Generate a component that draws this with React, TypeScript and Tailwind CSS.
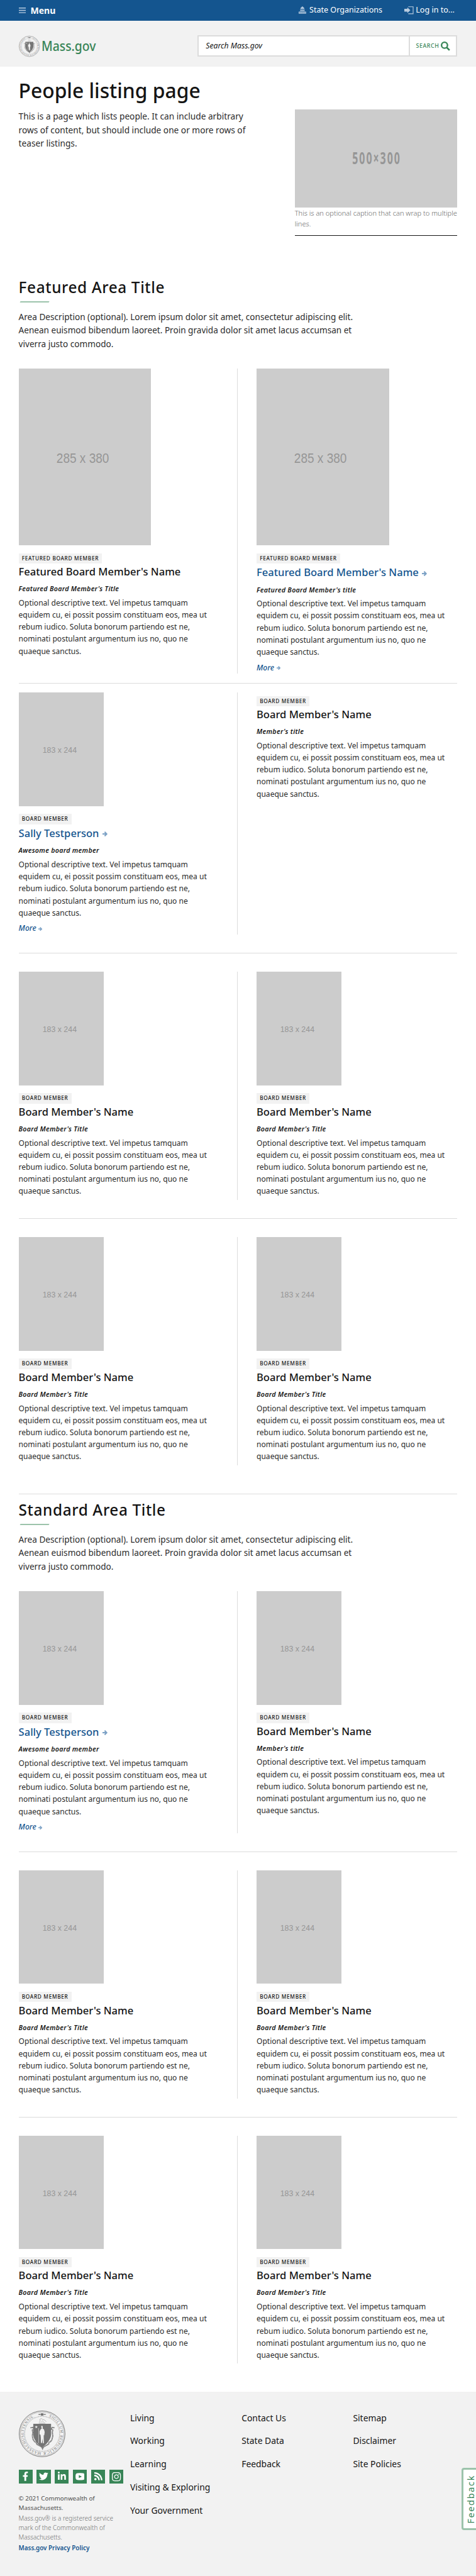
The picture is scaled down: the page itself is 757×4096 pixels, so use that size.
import type { ReactNode } from "react";
import { FaFacebookF, FaInstagram, FaLinkedinIn, FaRss, FaTwitter } from "react-icons/fa";

/* The root sets --spacing, so every numeric spacing class below counts in design units. */

type Person = {
  size?: "large" | "small" | "none";
  tag: string;
  name: string;
  title: string;
  link?: boolean;
};

const SEAL_GREY = "#757575";

function Seal({ id, className }: { id: string; className: string }) {
  return (
    <svg viewBox="0 0 100 100" className={`overflow-visible ${className}`} fill="none">
      <defs>
        <path id={id} d="M50 10.6A39.4 39.4 0 1 1 49.9 10.6" />
      </defs>
      <circle cx="50" cy="50" r="49.3" stroke={SEAL_GREY} strokeWidth="1.3" />
      <circle cx="50" cy="50" r="47" stroke={SEAL_GREY} strokeWidth="0.6" />
      <circle cx="50" cy="50" r="37.6" stroke={SEAL_GREY} strokeWidth="1" strokeDasharray="1 0.8" />
      <text
        fill={SEAL_GREY}
        className="font-['Liberation_Serif',serif] text-[8.4px]"
        textLength="215"
        lengthAdjust="spacing"
      >
        <textPath href={`#${id}`} startOffset="15">
          SIGILLUM REIPUBLICÆ MASSACHUSETTENSIS.
        </textPath>
      </text>
      <path d="M41 8.2l4-1.6v1h2.2v-1.9h5.6v1.9H55v-1l4 1.6-4 1.6v-1h-2.2v1.9h-5.6V8.8H45v1z" fill={SEAL_GREY} />
      <path d="M43 27h14M44 25l2-3-1-3 3-2 3 2 4 1 4 4M48 24l3-2 3 3" stroke={SEAL_GREY} strokeWidth="0.9" opacity="0.7" />
      <path
        d="M25 37l6-1 1 4-3 2 1 5-1 8 2 8 3 4 3 1 1 4 5 3 6 3 2 4 2-4 6-3 5-3 1-4 3-1 3-4 2-8-1-8 1-5-3-2 1-4 6 1"
        stroke={SEAL_GREY}
        strokeWidth="2.6"
        strokeDasharray="2.4 0.6"
      />
      <path d="M31 28.5h38.3v23c0 10-9 20.5-19.3 28-10.3-7.5-19-18-19-28z" fill={SEAL_GREY} />
      <path d="M37.5 32l.8 2.3h2.4l-2 1.5.8 2.3-2-1.4-2 1.4.8-2.3-2-1.5h2.4z" fill="#f2f2f2" />
      <path
        d="M48 34l2-2 1.5 3-.4 3.5 3 2 1.5 6-1 6.5-1.2.2.4 17h-2l-1-10-1 9.5h-2.2l-.4-12-.6-5.5-2-1v-7l2.6-4.4 2-.9z"
        fill="#f2f2f2"
      />
      <path d="M42.5 38v32" stroke="#f2f2f2" strokeWidth="0.8" />
    </svg>
  );
}

function Arrow({ className }: { className: string }) {
  return (
    <svg viewBox="0 0 11 11" className={className} fill="none" stroke="#7ba1c5" strokeWidth="2.8">
      <path d="M0 5.5h8.5" />
      <path d="M4.6 1l4.5 4.5-4.5 4.5" />
    </svg>
  );
}

function Placeholder({ size }: { size: "large" | "small" }) {
  return size === "large" ? (
    <svg viewBox="0 0 285 380" className="block h-380 w-285 bg-[#ccc]">
      <text x="81" y="203.5" textLength="113" lengthAdjust="spacingAndGlyphs" fill="#969696" className="font-['Liberation_Sans',sans-serif] text-[30px]">
        285 x 380
      </text>
    </svg>
  ) : (
    <svg viewBox="0 0 183 244" className="block h-244 w-183 bg-[#ccc]">
      <text x="51" y="130.5" textLength="73.5" lengthAdjust="spacingAndGlyphs" fill="#969696" className="font-['Liberation_Sans',sans-serif] text-[18px]">
        183 x 244
      </text>
    </svg>
  );
}

function PersonCard({ size = "small", tag, name, title, link }: Person) {
  return (
    <article className="flex flex-col items-start">
      {size !== "none" && <Placeholder size={size} />}
      <span className={`${size === "none" ? "mt-7.5" : "mt-17.25"} h-22 bg-[#f2f2f2] px-7 text-[8.28px] leading-22 font-medium tracking-[0.68px] whitespace-nowrap uppercase`}>
        {tag}
      </span>
      {link ? (
        <h3 className="mt-4.75 flex items-center text-[16.56px] leading-30 font-medium text-[#14558f]">
          {name}
          <Arrow className="mt-3 ml-7 size-11" />
        </h3>
      ) : (
        <h3 className="mt-2.75 text-[16.56px] leading-30 font-medium">{name}</h3>
      )}
      <p className="mt-12 text-[10.65px] leading-20 font-semibold tracking-[0.3px] italic">{title}</p>
      <p className="mt-6.75 w-418 text-[12.05px] leading-26 text-[#2b2b2b]">
        Optional descriptive text. Vel impetus tamquam equidem cu, ei possit possim constituam eos, mea ut rebum
        iudico. Soluta bonorum partiendo est ne, nominati postulant argumentum ius no, quo ne quaeque sanctus.
      </p>
      {link ? (
        <a className="mt-7.25 mb-0.5 flex items-center text-[12.1px] leading-26 font-medium text-[#14558f] italic">
          More
          <Arrow className="mt-3 ml-5 size-8.5" />
        </a>
      ) : (
        <div className="h-5.75" />
      )}
    </article>
  );
}

function Row({ people }: { people: [Person, Person] }) {
  return (
    <div className="flex">
      <div className="w-472 border-r border-[#dcdcdc]">
        <PersonCard {...people[0]} />
      </div>
      <div className="pl-40">
        <PersonCard {...people[1]} />
      </div>
    </div>
  );
}

function Rule({ className }: { className: string }) {
  return (
    <div className={`h-1 ${className}`}>
      <div className="h-px bg-[#dcdcdc]" />
    </div>
  );
}

function AreaIntro({ children }: { children: ReactNode }) {
  return (
    <header>
      <h2 className="text-[24.4px] leading-40 font-medium tracking-[0.6px]">{children}</h2>
      <div className="mt-10.5 ml-3 h-3 w-62 -skew-x-[30deg] bg-[#9cc3ab]" />
      <p className="mt-15.25 mb-39.25 w-735 text-[13.6px] leading-29 text-[#2b2b2b]">
        Area Description (optional). Lorem ipsum dolor sit amet, consectetur adipiscing elit. Aenean euismod bibendum
        laoreet. Proin gravida dolor sit amet lacus accumsan et viverra justo commodo.
      </p>
    </header>
  );
}

const featured = { size: "large" as const, tag: "Featured Board Member", name: "Featured Board Member's Name" };
const member: Person = { tag: "Board Member", name: "Board Member's Name", title: "Board Member's Title" };
const sally: Person = { tag: "Board Member", name: "Sally Testperson", title: "Awesome board member", link: true };

const footerLinks = [
  ["Living", "Working", "Learning", "Visiting & Exploring", "Your Government"],
  ["Contact Us", "State Data", "Feedback"],
  ["Sitemap", "Disclaimer", "Site Policies"],
];

function SocialTile({ children }: { children: ReactNode }) {
  return <a className="flex size-30 items-center justify-center bg-[#388557] text-white">{children}</a>;
}

export default function App() {
  return (
    <div className="relative h-[4096px] w-full overflow-hidden bg-white font-['Noto_Sans',sans-serif] text-[#141414] [--spacing:0.7392px]">
      <nav className="flex h-44 items-center bg-[#14558f] pl-40 text-white">
        <svg viewBox="0 0 15 12" className="h-12 w-15" stroke="#b8cce0" strokeWidth="2">
          <path d="M0 1h15M0 6h15M0 11h15" />
        </svg>
        <span className="ml-10.5 text-[14.05px] font-bold">Menu</span>
        <div className="ml-auto flex w-227 items-center">
          <svg viewBox="0 0 16 16" className="h-16 w-16" fill="#b8cce0">
            <path d="M7.3 0h1.4v1.5C10.8 2 12 3.5 12.2 5.5H3.8C4 3.5 5.2 2 7.3 1.5zM3 6.3h10v1H3z" />
            <path d="M3.5 7.8h9v3h-9zM0 11.5h16V16H0z" />
            <path d="M5 8.8h1v2H5zM7.5 8.8h1v2h-1zM10 8.8h1v2h-1zM1.7 13h1.3v1.5H1.7zM4.5 13h1.3v1.5H4.5zM7.3 13h1.4v1.5H7.3zM10.2 13h1.3v1.5h-1.3zM13 13h1.3v1.5H13z" fill="#14558f" />
          </svg>
          <span className="ml-6.5 text-[12.57px] whitespace-nowrap">State Organizations</span>
        </div>
        <div className="flex w-154 items-center">
          <svg viewBox="0 0 20 17" className="h-17 w-20" fill="#b8cce0">
            <path d="M0 5.5h6.5V2.5L13 8.5l-6.5 6V11.5H0z" />
            <path d="M8.5 1h10.5v15H8.5" fill="none" stroke="#b8cce0" strokeWidth="1.5" />
          </svg>
          <span className="ml-4.5 text-[12.57px] whitespace-nowrap">Log in to...</span>
        </div>
      </nav>

      <div className="flex h-99 items-start justify-between bg-[#f2f2f2] px-40 pt-32">
        <div className="mt-1 flex">
          <Seal id="seal-top" className="size-45" />
          <svg viewBox="0 0 121 45" className="h-45 w-121 overflow-visible">
            <text x="4" y="32" textLength="117" lengthAdjust="spacingAndGlyphs" fill="#388557" className="text-[29px] font-medium">
              Mass.gov
            </text>
          </svg>
        </div>
        <div className="flex h-46 w-560 border-2 border-[#dcdcdc] bg-white">
          <div className="flex w-455 items-center border-r-2 border-[#dcdcdc] pl-16 text-[12.2px] italic">Search Mass.gov</div>
          <div className="flex flex-1 items-center pl-13 text-[8.87px] font-medium tracking-[0.6px] text-[#388557]">
            SEARCH
            <svg viewBox="0 0 20 20" className="ml-4 size-20" fill="none" stroke="#388557">
              <circle cx="8" cy="8" r="6.4" strokeWidth="3.2" />
              <path d="M12.5 12.5l6.3 6.3" strokeWidth="3.6" />
            </svg>
          </div>
        </div>
      </div>

      <main className="px-40 pt-24">
        <h1 className="text-[31.8px] leading-56 font-medium">People listing page</h1>
        <div className="mt-13 flex items-start justify-between">
          <p className="w-510 text-[13.7px] leading-29 text-[#2b2b2b]">
            This is a page which lists people. It can include arbitrary rows of content, but should include one or more
            rows of teaser listings.
          </p>
          <figure className="h-272 w-350 border-b border-[#141414]">
            <svg viewBox="0 0 350 210" className="block h-210 w-350 bg-[#ccc]">
              <text transform="translate(123.4 118) scale(.6 1)" letterSpacing="4.4" fill="#969696" className="text-[36px] font-bold">
                500×300
              </text>
            </svg>
            <figcaption className="text-[11.05px] leading-23 font-light whitespace-nowrap text-[#6b6b6b]">
              This is an optional caption that can wrap to multiple
              <br />
              lines.
            </figcaption>
          </figure>
        </div>

        <section className="mt-90">
          <AreaIntro>Featured Area Title</AreaIntro>
          <Row people={[{ ...featured, title: "Featured Board Member's Title" }, { ...featured, title: "Featured Board Member's title", link: true }]} />
          <Rule className="mt-19.75 mb-19.75" />
          <Row people={[sally, { ...member, size: "none", title: "Member's title" }]} />
          <Rule className="mt-39.5 mb-40" />
          <Row people={[member, member]} />
          <Rule className="mt-39.5 mb-40" />
          <Row people={[member, member]} />
        </section>
        <Rule className="mt-61 mb-14" />
        <section>
          <AreaIntro>Standard Area Title</AreaIntro>
          <Row people={[sally, { ...member, title: "Member's title" }]} />
          <Rule className="mt-39.5 mb-39.75" />
          <Row people={[member, member]} />
          <Rule className="mt-39.5 mb-39.75" />
          <Row people={[member, member]} />
        </section>
      </main>

      <footer className="mt-60.5 flex h-400 bg-[#f2f2f2] pt-40 pl-40">
        <div className="w-240">
          <Seal id="seal-bottom" className="size-100" />
          <div className="mt-27 flex gap-9">
            <SocialTile><FaFacebookF className="size-20" /></SocialTile>
            <SocialTile><FaTwitter className="size-20" /></SocialTile>
            <SocialTile><FaLinkedinIn className="size-20" /></SocialTile>
            <SocialTile>
              <svg viewBox="0 0 20 16" className="h-16 w-20" fill="currentColor">
                <path fillRule="evenodd" d="M4 .7Q10 0 16 .7q3 .3 3.5 3 .6 4.3 0 8.6-.5 2.7-3.5 3-6 .7-12 0-3-.3-3.5-3-.6-4.3 0-8.6Q1 1 4 .7zM7.3 4.6v6.6L13.7 8z" />
              </svg>
            </SocialTile>
            <SocialTile><FaRss className="size-20" /></SocialTile>
            <SocialTile><FaInstagram className="size-22" /></SocialTile>
          </div>
          <p className="mt-21.75 w-200 text-[9.83px] leading-20 text-[#4f4f4f]">© 2021 Commonwealth of Massachusetts.</p>
          <p className="mt-4 w-215 text-[9.95px] leading-20 font-light text-[#707070]">
            Mass.gov® is a registered service mark of the Commonwealth of Massachusetts.
          </p>
          <a className="mt-3 block text-[9.9px] leading-20 font-semibold text-[#14558f]">Mass.gov Privacy Policy</a>
        </div>
        {footerLinks.map((links) => (
          <ul key={links[0]} className="mt-1 flex w-239.75 flex-col gap-20.75 text-[13.9px] leading-29">
            {links.map((label) => (
              <li key={label}>{label}</li>
            ))}
          </ul>
        ))}
      </footer>

      <div className="absolute top-5308 right-0 h-134 w-31 rounded-l-[4px] border-y-3 border-l-3 border-[#9cc3ab] bg-white">
        <svg viewBox="0 0 27 126" className="h-126 w-27 overflow-visible">
          <text transform="translate(23.4 116) rotate(-90)" textLength="103" lengthAdjust="spacing" fill="#388557" className="text-[19.6px]">
            Feedback
          </text>
        </svg>
      </div>
    </div>
  );
}
